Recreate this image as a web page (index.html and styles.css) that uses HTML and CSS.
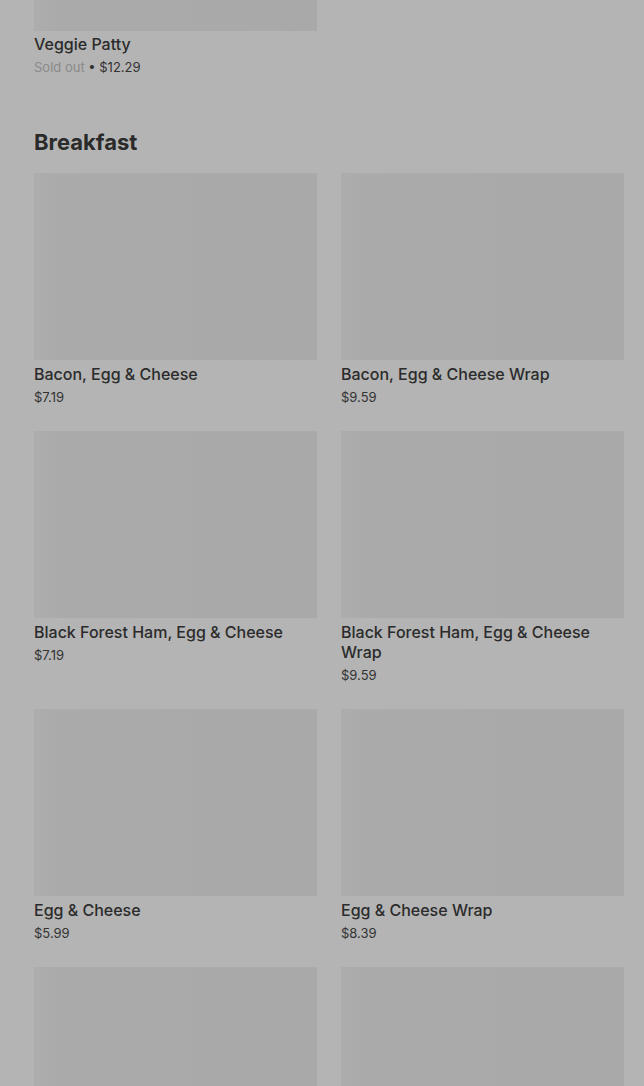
FILE: index.html
```html
<!DOCTYPE html>
<html lang="en">
<head>
    <meta charset="UTF-8">
    <title>Menu</title>
    <link rel="stylesheet" href="styles.css">
</head>
<body>
<div class="menu">
    <div class="grid grid-top">
        <div class="item">
            <div class="thumb"></div>
            <div class="info">
                <div class="name">Veggie Patty</div>
                <div class="price"><span class="soldout">Sold out</span> &bull; $12.29</div>
            </div>
        </div>
    </div>

    <h2 class="section-title">Breakfast</h2>
    <div class="grid">
        <div class="item">
            <div class="thumb"></div>
            <div class="info">
                <div class="name">Bacon, Egg &amp; Cheese</div>
                <div class="price">$7.19</div>
            </div>
        </div>
        <div class="item">
            <div class="thumb"></div>
            <div class="info">
                <div class="name">Bacon, Egg &amp; Cheese Wrap</div>
                <div class="price">$9.59</div>
            </div>
        </div>
        <div class="item">
            <div class="thumb"></div>
            <div class="info">
                <div class="name">Black Forest Ham, Egg &amp; Cheese</div>
                <div class="price">$7.19</div>
            </div>
        </div>
        <div class="item">
            <div class="thumb"></div>
            <div class="info">
                <div class="name">Black Forest Ham, Egg &amp; Cheese Wrap</div>
                <div class="price">$9.59</div>
            </div>
        </div>
        <div class="item">
            <div class="thumb"></div>
            <div class="info">
                <div class="name">Egg &amp; Cheese</div>
                <div class="price">$5.99</div>
            </div>
        </div>
        <div class="item">
            <div class="thumb"></div>
            <div class="info">
                <div class="name">Egg &amp; Cheese Wrap</div>
                <div class="price">$8.39</div>
            </div>
        </div>
        <div class="item">
            <div class="thumb"></div>
        </div>
        <div class="item">
            <div class="thumb"></div>
        </div>
    </div>
</div>
</body>
</html>
```

FILE: styles.css
```css
*{
    margin: 0;
    padding: 0;
    box-sizing: border-box;
}
html,body{
    height: 100%;
    overflow: hidden;
}
body{
    background: #b4b4b4;
    font-family: Inter, "Liberation Sans", Arial, sans-serif;
    color: #2a2a2a;
}
.menu{
    padding: 0 20px 0 34px;
}
.grid{
    display: grid;
    grid-template-columns: 283px 283px;
    column-gap: 24px;
    row-gap: 25px;
}
.grid-top{
    margin-top: -156px;
}
.grid-top .info{
    padding-top: 3px;
}
.thumb{
    height: 187px;
    background: linear-gradient(90deg, #adadad 0, #aaaaaa 24px, #a9a9a9 100%);
    box-shadow: inset 0 1px 0 #acacac;
}
.info{
    padding-top: 4px;
}
.name{
    font-size: 16px;
    line-height: 20px;
    font-weight: 500;
    color: #2b2b2b;
}
.price{
    font-size: 13px;
    line-height: 18px;
    margin-top: 4px;
    color: #333;
}
.soldout{
    color: #8a8a8a;
}
.section-title{
    font-size: 22px;
    line-height: 28px;
    font-weight: 700;
    color: #2a2a2a;
    margin: 52px 0 17px;
}
```
